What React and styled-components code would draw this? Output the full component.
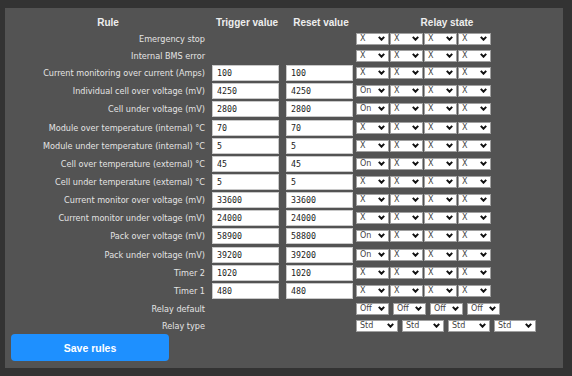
import React from "react";
import styled, { createGlobalStyle } from "styled-components";

const Global = createGlobalStyle`
  html, body { margin: 0; padding: 0; background: #333333; }
  body { width: 572px; height: 376px; overflow: hidden; font-family: "DejaVu Sans", sans-serif; }
`;

const Page = styled.div`
  box-sizing: border-box;
  width: 572px;
  height: 376px;
  padding: 8px 9px 8px 5px;
`;

const Panel = styled.div`
  box-sizing: border-box;
  width: 558px;
  height: 360px;
  background: #535353;
  padding: 6px 6px 7px 6px;
  display: flex;
  flex-direction: column;
  align-items: flex-start;
`;

const Table = styled.table`
  border-collapse: collapse;
  border-spacing: 0;
  table-layout: fixed;
  width: 527px;
`;

const Row = styled.tr`
  height: ${(p) => p.$h}px;
`;

const Head = styled.th`
  height: 16px;
  padding: 0 ${(p) => p.$pr || 0}px 0 ${(p) => p.$pl || 0}px;
  font-family: "Liberation Sans", Arial, sans-serif;
  font-weight: bold;
  font-size: 10px;
  color: #eeeeee;
  text-align: center;
  vertical-align: middle;
`;

const Label = styled.td`
  padding: 0 3px 0 0;
  text-align: right;
  font-size: 8.15px;
  color: #e4e4e4;
  white-space: nowrap;
  vertical-align: middle;
`;

const Cell = styled.td`
  padding: 0 0 0 ${(p) => p.$pl || 0}px;
  vertical-align: middle;
`;

const Value = styled.input`
  box-sizing: border-box;
  display: block;
  width: 67px;
  height: 16px;
  margin: 0;
  padding: 0 4px;
  border: 1px solid #c8c8c8;
  background: #ffffff;
  color: #222222;
  font-family: "DejaVu Sans Mono", monospace;
  font-size: 8.3px;
  outline: none;
`;

const RelayGroup = styled.div`
  display: flex;
  gap: ${(p) => p.$gap}px;
`;

const SelectWrap = styled.span`
  position: relative;
  display: block;
  width: ${(p) => p.$w}px;
  height: 12px;
`;

const Select = styled.select`
  box-sizing: border-box;
  appearance: none;
  -webkit-appearance: none;
  display: block;
  width: 100%;
  height: 100%;
  margin: 0;
  padding: 0 0 0 3px;
  border: 1px solid #a0a0a0;
  border-radius: 0;
  background: #ffffff;
  color: #444444;
  font-family: "DejaVu Sans", sans-serif;
  font-size: 8px;
  line-height: 10px;
  outline: none;
`;

const Chevron = styled.svg`
  position: absolute;
  right: 4px;
  top: 3px;
  width: 7px;
  height: 5px;
  pointer-events: none;
`;

const SaveButton = styled.button`
  width: 158px;
  height: 27px;
  margin: 0;
  border: none;
  border-radius: 4px;
  background: #1e90ff;
  color: #ffffff;
  font-family: "Liberation Sans", Arial, sans-serif;
  font-weight: bold;
  font-size: 10.5px;
  cursor: pointer;
`;

const X4 = ["X", "X", "X", "X"];
const ON = ["On", "X", "X", "X"];

const rules = [
  { label: "Emergency stop", relay: X4 },
  { label: "Internal BMS error", relay: X4 },
  { label: "Current monitoring over current (Amps)", t: "100", r: "100", relay: X4 },
  { label: "Individual cell over voltage (mV)", t: "4250", r: "4250", relay: ON },
  { label: "Cell under voltage (mV)", t: "2800", r: "2800", relay: ON },
  { label: "Module over temperature (internal) °C", t: "70", r: "70", relay: X4 },
  { label: "Module under temperature (internal) °C", t: "5", r: "5", relay: X4 },
  { label: "Cell over temperature (external) °C", t: "45", r: "45", relay: ON },
  { label: "Cell under temperature (external) °C", t: "5", r: "5", relay: X4 },
  { label: "Current monitor over voltage (mV)", t: "33600", r: "33600", relay: X4 },
  { label: "Current monitor under voltage (mV)", t: "24000", r: "24000", relay: X4 },
  { label: "Pack over voltage (mV)", t: "58900", r: "58800", relay: ON },
  { label: "Pack under voltage (mV)", t: "39200", r: "39200", relay: ON },
  { label: "Timer 2", t: "1020", r: "1020", relay: X4 },
  { label: "Timer 1", t: "480", r: "480", relay: X4 },
];

function Dropdown({ value, options, width }) {
  return (
    <SelectWrap $w={width}>
      <Select defaultValue={value}>
        {options.map((o) => (
          <option key={o} value={o}>{o}</option>
        ))}
      </Select>
      <Chevron viewBox="0 0 7 5" aria-hidden="true">
        <path d="M0.8 0.9 L3.5 3.7 L6.2 0.9" fill="none" stroke="#111111" strokeWidth="2" />
      </Chevron>
    </SelectWrap>
  );
}

function RelaySelects({ values, options, width, gap }) {
  return (
    <RelayGroup $gap={gap}>
      {values.map((v, i) => (
        <Dropdown key={i} value={v} options={options} width={width} />
      ))}
    </RelayGroup>
  );
}

export default function App() {
  return (
    <>
      <Global />
      <Page>
        <Panel>
          <Table>
            <colgroup>
              <col style={{ width: 197 }} />
              <col style={{ width: 74 }} />
              <col style={{ width: 74 }} />
              <col style={{ width: 182 }} />
            </colgroup>
            <thead>
              <tr>
                <Head $pr={3}>Rule</Head>
                <Head $pl={4}>Trigger value</Head>
                <Head $pl={4}>Reset value</Head>
                <Head>Relay state</Head>
              </tr>
            </thead>
            <tbody>
              {rules.map((r) => {
                const hasValues = r.t !== undefined;
                return (
                  <Row key={r.label} $h={hasValues ? 18.17 : 17}>
                    <Label>{r.label}</Label>
                    <Cell $pl={4}>{hasValues && <Value defaultValue={r.t} />}</Cell>
                    <Cell $pl={4}>{hasValues && <Value defaultValue={r.r} />}</Cell>
                    <Cell>
                      <RelaySelects values={r.relay} options={["X", "On", "Off"]} width={33} gap={1} />
                    </Cell>
                  </Row>
                );
              })}
              <Row $h={17}>
                <Label>Relay default</Label>
                <Cell />
                <Cell />
                <Cell>
                  <RelaySelects values={["Off", "Off", "Off", "Off"]} options={["Off", "On"]} width={33} gap={4} />
                </Cell>
              </Row>
              <Row $h={17}>
                <Label>Relay type</Label>
                <Cell />
                <Cell />
                <Cell>
                  <RelaySelects values={["Std", "Std", "Std", "Std"]} options={["Std", "Pulse"]} width={42} gap={4} />
                </Cell>
              </Row>
            </tbody>
          </Table>
          <SaveButton type="button">Save rules</SaveButton>
        </Panel>
      </Page>
    </>
  );
}
